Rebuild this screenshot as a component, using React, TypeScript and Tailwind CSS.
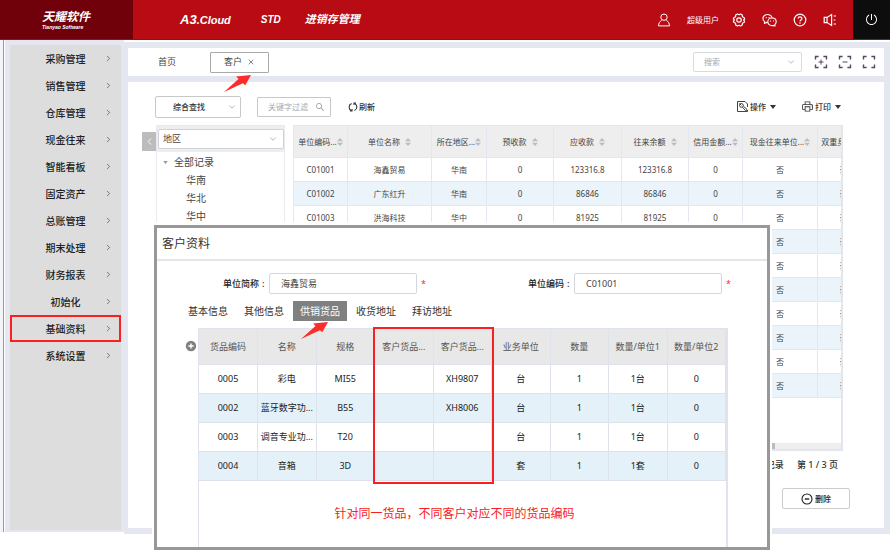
import { useState } from 'react'
import type { ReactNode } from 'react'
import { AiOutlinePoweroff, AiOutlineSearch, AiOutlinePrinter } from 'react-icons/ai'
import { ChevronDown, ChevronLeft, ChevronRight, X } from 'lucide-react'

const menuItems = [
  '采购管理',
  '销售管理',
  '仓库管理',
  '现金往来',
  '智能看板',
  '固定资产',
  '总账管理',
  '期末处理',
  '财务报表',
  '初始化',
  '基础资料',
  '系统设置',
]

const customerColumns = [
  { title: '单位编码...', width: 'w-[54px]', tight: true },
  { title: '单位名称', width: 'w-[84px]', tight: false },
  { title: '所在地区...', width: 'w-[55px]', tight: true },
  { title: '预收款', width: 'w-[67px]', tight: false },
  { title: '应收款', width: 'w-[68px]', tight: false },
  { title: '往来余额', width: 'w-[67px]', tight: false },
  { title: '信用金额...', width: 'w-[54px]', tight: true },
  { title: '现金往来单位...', width: 'w-[75px]', tight: true },
  { title: '双重身份...', width: 'w-[52px]', tight: true },
]

const emptyCustomer = ['', '', '', '', '', '', '', '否', '否']

const customers = [
  ['C01001', '海鑫贸易', '华南', '0', '123316.8', '123316.8', '0', '否', '否'],
  ['C01002', '广东红升', '华南', '0', '86846', '86846', '0', '否', '否'],
  ['C01003', '洪海科技', '华中', '0', '81925', '81925', '0', '否', '否'],
  emptyCustomer,
  emptyCustomer,
  emptyCustomer,
  emptyCustomer,
  emptyCustomer,
  emptyCustomer,
  emptyCustomer,
]

const goodsColumns = ['货品编码', '名称', '规格', '客户货品...', '客户货品...', '业务单位', '数量', '数量/单位1', '数量/单位2']

const goods = [
  ['0005', '彩电', 'MI55', '', 'XH9807', '台', '1', '1台', '0'],
  ['0002', '蓝牙数字功...', 'B55', '', 'XH8006', '台', '1', '1台', '0'],
  ['0003', '调音专业功...', 'T20', '', '', '台', '1', '1台', '0'],
  ['0004', '音箱', '3D', '', '', '套', '1', '1套', '0'],
]

const modalTabs = ['基本信息', '其他信息', '供销货品', '收货地址', '拜访地址']

function UserIcon() {
  return (
    <svg viewBox="0 0 14 14" className="size-[14px]" fill="none" stroke="currentColor" strokeWidth="1">
      <circle cx="7" cy="4.2" r="3.2" />
      <path d="M4.6 7.4 C2.6 8.6 1.6 10.4 1.5 12.9 H12.5 C12.4 10.4 11.4 8.6 9.4 7.4" />
    </svg>
  )
}

function GearIcon() {
  return (
    <svg viewBox="0 0 14 14" className="size-[14px]" fill="none" stroke="currentColor" strokeWidth="1.2" strokeLinejoin="round">
      <path d="M5.4 1 L7 1.8 L8.6 1 L10.3 2 L10.4 3.8 L12.2 4.7 L12.6 6 L11.6 7 L12.6 8 L12.2 9.3 L10.4 10.2 L10.3 12 L8.6 13 L7 12.2 L5.4 13 L3.7 12 L3.6 10.2 L1.8 9.3 L1.4 8 L2.4 7 L1.4 6 L1.8 4.7 L3.6 3.8 L3.7 2 Z" />
      <circle cx="7" cy="7" r="2.2" />
    </svg>
  )
}

function WechatIcon() {
  return (
    <svg viewBox="0 0 15 14" className="h-[14px] w-[15px]" fill="none" stroke="currentColor" strokeWidth="1.1" strokeLinejoin="round">
      <path d="M5.6 9.6 L4.2 9.4 L2.4 10.4 L2.7 8.7 C0.2 6.8 0.4 3.4 3.2 2 C6.4 0.6 9.8 2.2 10.2 5" />
      <path d="M10 5 C12.6 5 14.2 6.8 14.2 8.8 C14.2 10 13.6 11 12.8 11.6 L13 13 L11.4 12.4 C8.4 13.2 5.8 11.4 5.8 8.8 C5.8 6.8 7.6 5 10 5 Z" />
      <path d="M3.8 4.6 H4.8 M6.6 4.6 H7.6 M8 8 H9 M11 8 H12" />
    </svg>
  )
}

function HelpIcon() {
  return (
    <svg viewBox="0 0 14 14" className="size-[14px]" fill="none" stroke="currentColor" strokeWidth="1.2">
      <circle cx="7" cy="7" r="5.8" />
      <path d="M5.1 5.6 C5.1 3.2 8.9 3.2 8.9 5.5 C8.9 7 7 7 7 8.6" />
      <path d="M7 9.6 V10.8" />
    </svg>
  )
}

function SpeakerIcon() {
  return (
    <svg viewBox="0 0 14 14" className="size-[14px]" fill="none" stroke="currentColor" strokeWidth="1.2">
      <path d="M1.2 4.4 H4 L8.6 1.6 V12.4 L4 9.6 H1.2 Z" />
      <path d="M4 4.4 V9.6" />
      <path d="M10.6 3 H13 M10.6 7 H12.4 M10.6 11 H13" />
    </svg>
  )
}

function FrameIcon({ children }: { children?: ReactNode }) {
  return (
    <svg viewBox="0 0 14 14" className="size-[14px]" fill="none" stroke="#5a4560" strokeWidth="1.4">
      <path d="M1.5 4.6 V1.5 H4.6 M9.4 1.5 H12.5 V4.6 M12.5 9.4 V12.5 H9.4 M4.6 12.5 H1.5 V9.4" />
      {children}
    </svg>
  )
}

function RefreshIcon() {
  return (
    <svg viewBox="0 0 10 10" className="size-[10px]" fill="none" stroke="currentColor" strokeWidth="1.1">
      <path d="M3.6 1.4 A3.9 3.9 0 0 0 3.4 8.6 M6.4 8.6 A3.9 3.9 0 0 0 6.6 1.4" />
      <path d="M2 8.9 H4 V7 M8 1.1 H6 V3" />
    </svg>
  )
}

function OperateIcon() {
  return (
    <svg viewBox="0 0 13 13" className="size-[13px]" fill="none" stroke="#444" strokeWidth="1">
      <path d="M11.5 7 V4 L9 1.5 H1.5 V11.5 H11.5 V10" />
      <circle cx="5.4" cy="5.4" r="1.9" />
      <path d="M3.4 3.4 L5.4 5.4 M6.4 7.2 L9.8 10.8 L11.2 9.6 L7.4 6.2" />
    </svg>
  )
}

function SortIcon() {
  return (
    <svg viewBox="0 0 6 8" className="h-[8px] w-[6px] shrink-0" fill="#b9bcc6">
      <path d="M3 0 L6 3.3 H0 Z M0 4.7 H6 L3 8 Z" />
    </svg>
  )
}

function Arrow() {
  return (
    <svg viewBox="0 0 80 50" className="h-[17px] w-[27px]" fill="#fb2c2c">
      <path d="M0 50 L43 12 L36 4 L80 0 L63 30 L56 24 Z" />
    </svg>
  )
}

function Caret() {
  return (
    <svg viewBox="0 0 6 4" className="ml-[3px] h-[4px] w-[6px]" fill="#333">
      <path d="M0 0 H6 L3 4 Z" />
    </svg>
  )
}

function Header() {
  return (
    <header className="flex h-[40px] items-stretch border-b border-[#a00a12] bg-[#b80b14] text-white">
      <div className="flex w-[133px] flex-col items-start justify-center bg-[#70000a] pl-[42px] italic">
        <div className="text-[12px] leading-[14px] font-bold">天耀软件</div>
        <div className="font-['Liberation_Sans'] text-[5px] leading-[6px] font-bold">Tianyao Software</div>
      </div>
      <div className="flex flex-1 items-center pl-[47px] font-bold italic">
        <div className="font-['Liberation_Sans'] text-[11px]">
          <span className="text-[13px]">A3</span>.Cloud
        </div>
        <div className="ml-[30px] font-['Liberation_Sans'] text-[10px]">STD</div>
        <div className="ml-[24px] text-[11px]">进销存管理</div>
      </div>
      <div className="flex items-center gap-[16px] pr-[16px]">
        <button aria-label="用户">
          <UserIcon />
        </button>
        <span className="text-[8px]">超级用户</span>
        <button aria-label="设置" className="-ml-[3px]">
          <GearIcon />
        </button>
        <button aria-label="微信">
          <WechatIcon />
        </button>
        <button aria-label="帮助">
          <HelpIcon />
        </button>
        <button aria-label="公告">
          <SpeakerIcon />
        </button>
      </div>
      <button aria-label="退出" className="flex w-[37px] items-center justify-center bg-[#0d0d0d]">
        <AiOutlinePoweroff className="size-[13px]" />
      </button>
    </header>
  )
}

function Sidebar() {
  return (
    <div className="mb-[2px] flex w-[124px] shrink-0 bg-[#f3f4f8] pl-[3px]">
      <div className="flex flex-1 border-l border-[#999] bg-white pl-px">
        <nav className="flex-1 bg-[#e4e7ef] pt-[5px] pr-[3px] pb-[2px] pl-[5px]">
          <ul className="h-full bg-[#ddd]">
            {menuItems.map((item) => (
              <li key={item}>
                <button
                  className={
                    item === '基础资料'
                      ? 'flex h-[27px] w-full items-center border-2 border-[#fb1f1f] pr-[6px]'
                      : 'flex h-[27px] w-full items-center border-2 border-transparent pr-[6px]'
                  }
                >
                  <span className="flex-1 pt-px pl-[15px] text-center text-[10px] font-medium text-[#222]">{item}</span>
                  <ChevronRight className="size-[9px] text-[#555]" strokeWidth={2} />
                </button>
              </li>
            ))}
          </ul>
        </nav>
      </div>
    </div>
  )
}

function TabBar() {
  return (
    <div className="flex h-[28px] items-center bg-white pr-[8px] pl-[30px] text-[9px] text-[#444]">
      <button className="w-[52px] text-left">首页</button>
      <div className="relative">
        <button className="flex h-[21px] w-[59px] items-center justify-center gap-[5px] rounded-[1px] border border-[#aaa]">
          客户
          <X className="size-[8px]" strokeWidth={2} />
        </button>
        <div className="absolute top-[23px] left-[14px] z-10">
          <Arrow />
        </div>
      </div>
      <div className="relative mr-[12px] ml-auto">
        <select
          aria-label="搜索"
          className="h-[20px] w-[109px] appearance-none rounded-[2px] border border-[#d9dbe3] bg-white pl-[10px] text-[8px] text-[#a5a9b3]"
        >
          <option>搜索</option>
        </select>
        <ChevronDown className="pointer-events-none absolute top-[5px] right-[6px] size-[10px] text-[#aaaeb8]" strokeWidth={2} />
      </div>
      <div className="flex gap-[10px]">
        <button aria-label="放大">
          <FrameIcon>
            <path d="M7 4.5 V9.5 M4.5 7 H9.5" strokeWidth="1" />
          </FrameIcon>
        </button>
        <button aria-label="缩小">
          <FrameIcon>
            <path d="M4.5 7 H9.5" strokeWidth="1" />
          </FrameIcon>
        </button>
        <button aria-label="全屏">
          <FrameIcon />
        </button>
      </div>
    </div>
  )
}

function Toolbar() {
  return (
    <div className="flex h-[23px] items-center pl-[27px] text-[8px] font-medium text-[#333]">
      <div className="relative">
        <select
          aria-label="查找方式"
          className="h-[22px] w-[86px] appearance-none rounded-[2px] border border-[#c8c8c8] bg-white pl-[17px]"
        >
          <option>综合查找</option>
        </select>
        <ChevronDown className="pointer-events-none absolute top-[6px] right-[4px] size-[10px] text-[#aaa]" strokeWidth={2} />
      </div>
      <div className="relative ml-[16px]">
        <input
          aria-label="关键字过滤"
          placeholder="关键字过滤"
          className="h-[20px] w-[74px] rounded-[1px] border border-[#c8c8c8] pl-[10px] font-normal placeholder:text-[#a5a9b3]"
        />
        <AiOutlineSearch className="absolute top-[5px] right-[6px] size-[10px] text-[#999]" />
      </div>
      <button className="ml-[17px] flex items-center gap-px">
        <RefreshIcon />
        刷新
      </button>
      <button className="ml-auto flex items-center gap-px">
        <OperateIcon />
        操作
        <Caret />
      </button>
      <button className="mr-[43px] ml-[25px] flex items-center gap-px">
        <AiOutlinePrinter className="size-[13px]" />
        打印
        <Caret />
      </button>
    </div>
  )
}

function RegionTree() {
  return (
    <div className="w-[129px] shrink-0 border border-[#e8eaf0] text-[10px] text-[#444]">
      <div className="bg-[#eee] pt-[3px] pb-[3px] pl-px">
        <div className="relative">
          <select
            aria-label="地区"
            className="h-[20px] w-full appearance-none rounded-[2px] border border-[#d0d2da] bg-white pl-[4px] text-[9px]"
          >
            <option>地区</option>
          </select>
          <ChevronDown className="pointer-events-none absolute top-[5px] right-[6px] size-[10px] text-[#aaa]" strokeWidth={2} />
        </div>
      </div>
      <div className="pt-px leading-[18px]">
        <div className="flex items-center gap-[6px] pl-[6px]">
          <svg viewBox="0 0 6 4" className="h-[3px] w-[5px]" fill="#999">
            <path d="M0 0 H6 L3 4 Z" />
          </svg>
          全部记录
        </div>
        <ul className="pl-[29px]">
          <li>华南</li>
          <li>华北</li>
          <li>华中</li>
        </ul>
      </div>
    </div>
  )
}

function CustomerTable() {
  return (
    <div className="flex min-w-0 flex-1 flex-col overflow-hidden border-r-2 border-b-2 border-[#e2e5ee]">
      <table className="w-full min-w-[576px] table-fixed border-collapse text-center text-[8px] text-[#444]">
        <thead>
          <tr className="h-[32px] bg-[#eee]">
            {customerColumns.map((column) => (
              <th key={column.title} className={`${column.width} border border-[#e4e7f0] p-0 font-normal`}>
                <div
                  className={
                    column.tight
                      ? 'flex items-center justify-center whitespace-nowrap'
                      : 'flex items-center justify-center gap-[5px] whitespace-nowrap'
                  }
                >
                  {column.title}
                  <SortIcon />
                </div>
              </th>
            ))}
          </tr>
        </thead>
        <tbody>
          {customers.map((row, rowIndex) => (
            <tr key={rowIndex} className="h-[24px] even:bg-[#eaf4fa]">
              {row.map((cell, index) => (
                <td key={index} className="border border-[#e4e7f0] p-0">
                  {cell}
                </td>
              ))}
            </tr>
          ))}
        </tbody>
      </table>
      <div className="mt-auto h-[6px] bg-[#eee]">
        <div className="h-full w-[482px] bg-[#bbb]" />
      </div>
    </div>
  )
}

function Content() {
  return (
    <div className="mt-[6px] bg-white pt-[13px] pb-[19px]">
      <Toolbar />
      <div className="mt-[7px] flex min-h-[326px] pr-[41px] pl-[14px]">
        <button aria-label="收起" className="mt-[7px] flex h-[19px] w-[14px] items-center justify-center bg-[#bcbcbc] text-white">
          <ChevronLeft className="size-[11px]" />
        </button>
        <RegionTree />
        <div className="ml-[8px] flex min-w-0 flex-1">
          <CustomerTable />
        </div>
      </div>
      <div className="mt-[6px] flex h-[16px] items-center justify-end gap-[13px] pr-[46px] text-[9px] font-medium text-[#333]">
        <span>记录</span>
        <span>第 1 / 3 页</span>
      </div>
      <div className="mt-[15px] flex justify-end pr-[34px]">
        <button className="flex h-[21px] w-[68px] items-center justify-center gap-[2px] rounded-[2px] border border-[#ccc] text-[8px] font-medium text-[#222]">
          <svg viewBox="0 0 12 12" className="size-[12px]" fill="none" stroke="currentColor" strokeWidth="1.1">
            <circle cx="6" cy="6" r="5" />
            <path d="M3.8 6 H8.2" strokeWidth="1.4" />
          </svg>
          删除
        </button>
      </div>
    </div>
  )
}

function Field({ id, label, value }: { id: string; label: string; value: string }) {
  return (
    <div className="flex items-center pl-[66px] text-[9px]">
      <label htmlFor={id} className="flex w-[46px] gap-[3px] font-medium text-[#222]">
        {label}
        <span>:</span>
      </label>
      <input
        id={id}
        defaultValue={value}
        className="h-[21px] w-[148px] rounded-[2px] border border-[#d5d7e0] px-[11px] text-[#444]"
      />
      <span className="ml-[4px] text-[9px] text-[#fb2c2c]">*</span>
    </div>
  )
}

function CustomerModal() {
  const [activeTab, setActiveTab] = useState('供销货品')

  return (
    <div role="dialog" aria-labelledby="modal-title" className="absolute top-[222px] right-[118px] left-[152px] z-20 bg-white px-[2px] pt-[3px]">
      <div className="border-[3px] border-[#989898] bg-white">
        <h2 id="modal-title" className="border-b-2 border-[#e6e6e6] pl-[5px] text-[12px] leading-[31px] text-[#333]">
          客户资料
        </h2>
        <div className="mt-[12px] grid grid-cols-2">
          <Field id="short-name" label="单位简称" value="海鑫贸易" />
          <Field id="unit-code" label="单位编码" value="C01001" />
        </div>

        <div className="mt-[7px] flex gap-[2px] pl-[24px] text-[10px] text-[#333]">
          {modalTabs.map((tab) => (
            <div key={tab} className="relative">
              <button
                onClick={() => setActiveTab(tab)}
                className={tab === activeTab ? 'h-[20px] bg-[#808080] px-[7px] text-white' : 'h-[20px] px-[7px]'}
              >
                {tab}
              </button>
              {tab === activeTab && (
                <div className="pointer-events-none absolute top-[21px] left-[8px] z-10">
                  <Arrow />
                </div>
              )}
            </div>
          ))}
        </div>

        <div className="mt-[7px] flex items-start pr-[39px] pl-[28px]">
          <button aria-label="新增" className="mt-[12px] mr-px text-[#808080]">
            <svg viewBox="0 0 12 12" className="size-[12px]">
              <circle cx="6" cy="6" r="5.2" fill="currentColor" />
              <path d="M6 3.4 V8.6 M3.4 6 H8.6" stroke="#fff" strokeWidth="1.4" />
            </svg>
          </button>
          <div className="relative min-h-[219px] flex-1 border-r-2 border-l border-[#e0e3ed]">
            <table className="w-full table-fixed border-collapse text-center text-[9px] text-[#222]">
              <thead>
                <tr className="h-[36px] bg-[#e8e8e8] text-[#555]">
                  {goodsColumns.map((column, index) => (
                    <th key={index} className="border border-l-0 border-[#dde2ec] p-0 font-normal whitespace-nowrap">
                      {column}
                    </th>
                  ))}
                </tr>
              </thead>
              <tbody>
                {goods.map((row) => (
                  <tr key={row[0]} className="h-[29px] even:bg-[#e5f1f8]">
                    {row.map((cell, index) => (
                      <td key={index} className="overflow-hidden border border-l-0 border-[#dde2ec] p-0 whitespace-nowrap">
                        {cell}
                      </td>
                    ))}
                  </tr>
                ))}
              </tbody>
            </table>
            {/* highlight around the customer goods columns */}
            <div className="pointer-events-none absolute -top-px left-[33%] h-[157px] w-[23%] border-2 border-[#fb2020]" />
            <p className="mt-[24px] pr-[16px] text-center text-[12px] leading-[18px] text-[#fb2020]">
              针对同一货品，不同客户对应不同的货品编码
            </p>
          </div>
        </div>
      </div>
    </div>
  )
}

export default function App() {
  return (
    <div className="relative min-h-screen bg-white font-['Noto_Sans','Noto_Sans_CJK_SC',sans-serif]">
      <Header />
      <div className="flex">
        <Sidebar />
        <main className="min-w-0 flex-1 border-t-2 border-white bg-[#e4e7ef] pt-[6px] pr-[6px] pb-[6px] pl-[4px]">
          <TabBar />
          <Content />
        </main>
      </div>
      <CustomerModal />
    </div>
  )
}
